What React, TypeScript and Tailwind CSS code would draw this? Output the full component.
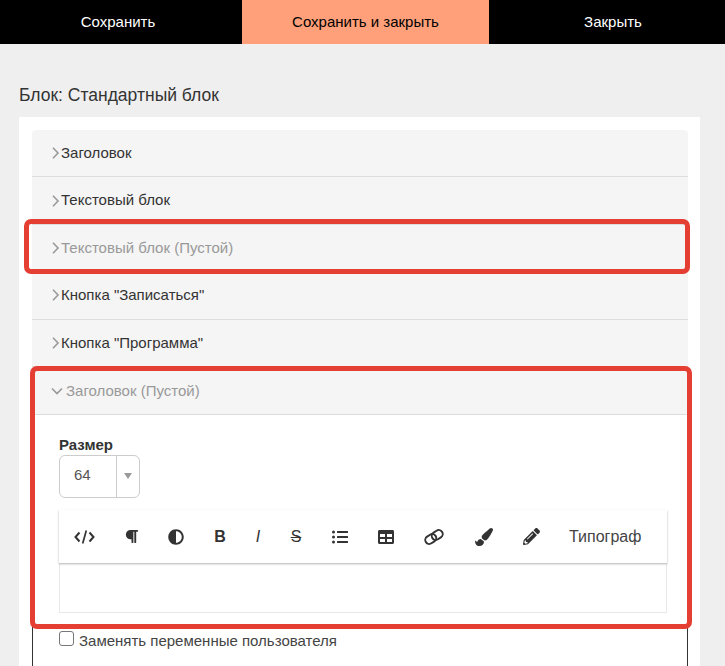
import React from "react";
import { FaAdjust, FaListUl, FaPaintBrush, FaParagraph, FaPencilAlt, FaTable } from "react-icons/fa";

const Chevron = ({ open }: { open?: boolean }) => (
  <svg width="12" height="12" viewBox="0 0 12 12" fill="none" stroke="#999" strokeWidth="1.6" className="shrink-0">
    {open ? <path d="M1 3.5 6 8.5 11 3.5" /> : <path d="M3 .7 8 6 3 11.3" />}
  </svg>
);

const Row = ({ title, muted }: { title: string; muted?: boolean }) => (
  <div className={`flex h-[47.4px] items-center border-b border-[#ddd] bg-[#f5f5f5] pl-[18px] text-[15px] ${muted ? "text-[#999]" : "text-[#333]"}`}>
    <Chevron />
    <span className="-ml-[1px]">{title}</span>
  </div>
);

const CodeIcon = () => (
  <svg width="21" height="14" viewBox="0 0 21 14" fill="none" stroke="#333" strokeWidth="2">
    <path d="M5.5 2.5 1.5 7l4 4.5M15.5 2.5l4 4.5-4 4.5" />
    <path d="M12.3.5 8.7 13.5" strokeWidth="1.7" />
  </svg>
);

const LinkIcon = () => (
  <svg width="20" height="16" viewBox="0 0 20 16" fill="none" stroke="#333" strokeWidth="1.9">
    <rect x="1" y="6" width="11.5" height="8" rx="4" transform="rotate(-33 6.75 10)" />
    <rect x="7.5" y="2" width="11.5" height="8" rx="4" transform="rotate(-33 13.25 6)" />
  </svg>
);

const tools = [
  { icon: <CodeIcon />, w: "w-[50px]" },
  { icon: <FaParagraph size={15} />, w: "w-[44px]" },
  { icon: <FaAdjust size={16} />, w: "w-[46px]" },
  { icon: <span className="text-[16px] font-bold">B</span>, w: "w-[42px]" },
  { icon: <span className="text-[16px] italic">I</span>, w: "w-[34px]" },
  { icon: <span className="text-[16px] line-through">S</span>, w: "w-[42px]" },
  { icon: <FaListUl size={16} />, w: "w-[46px]" },
  { icon: <FaTable size={16} />, w: "w-[46px]" },
  { icon: <LinkIcon />, w: "w-[50px]" },
  { icon: <FaPaintBrush size={18} />, w: "w-[50px]" },
  { icon: <FaPencilAlt size={17} />, w: "w-[44px]" },
];

export default function App() {
  return (
    <div className="relative h-[666px] overflow-hidden bg-[#efefef] font-['Liberation_Sans',Arial,sans-serif] text-[#333]">
      {/* Top buttons */}
      <div className="flex h-[44px] bg-black text-[15px] text-white">
        <div className="flex w-[242px] items-center justify-center pr-[6px]">Сохранить</div>
        <div className="flex w-[247px] items-center justify-center bg-[#ffa07a] text-black">Сохранить и закрыть</div>
        <div className="flex flex-1 items-center justify-center pl-[12px]">Закрыть</div>
      </div>

      <div className="pr-[25px] pl-[19px]">
        <h1 className="mt-[40px] h-[33px] text-[17.5px] leading-[22px] font-normal">Блок: Стандартный блок</h1>

        <div className="h-[600px] bg-white pt-[13px] pr-[12px] pl-[13px]">
          {/* Accordion */}
          <div className="overflow-hidden rounded-t-[4px]">
            <Row title="Заголовок" />
            <Row title="Текстовый блок" />
            <Row title="Текстовый блок (Пустой)" muted />
            <Row title="Кнопка &quot;Записаться&quot;" />
            <Row title="Кнопка &quot;Программа&quot;" />
            <div className="flex h-[48px] items-center border-b border-[#ddd] bg-[#f5f5f5] pt-[1px] pl-[19px] text-[15px] text-[#999]">
              <Chevron open />
              <span className="ml-[3px]">Заголовок (Пустой)</span>
            </div>
          </div>

          <div className="h-[300px] border-x border-[#333]">
            <div className="bg-white pt-[20px] pr-[20px] pl-[26px]">
              <div className="text-[15px] leading-[20px] font-bold">Размер</div>
              <div className="flex h-[43px] w-[81px] rounded-[6px] border border-[#ccc] text-[15px] text-[#555]">
                <div className="flex w-[56px] items-center pb-[2px] pl-[14px]">64</div>
                <div className="flex flex-1 items-center justify-center border-l border-[#ccc]">
                  <div className="h-0 w-0 border-x-[4px] border-t-[6px] border-x-transparent border-t-[#999]" />
                </div>
              </div>

              {/* Editor */}
              <div className="relative z-10 mt-[12px] flex h-[53px] items-center bg-white pt-[1px] text-[#333] shadow-[0_1px_2px_rgba(0,0,0,0.3)]">
                {tools.map((t, i) => (
                  <div key={i} className={`flex items-center justify-center ${t.w}`}>{t.icon}</div>
                ))}
                <span className="ml-[16px] text-[16px] text-[#444]">Типограф</span>
              </div>
              <div className="h-[50px] border border-t-0 border-[#e8e8e8] bg-white" />
            </div>

            <label className="mt-[17px] flex items-start pl-[26px] text-[15px] leading-[21px] text-[#444]">
              <span className="mt-[1px] h-[15px] w-[15px] rounded-[3px] border border-[#777] bg-white" />
              <span className="ml-[5px]">Заменять переменные пользователя</span>
            </label>
          </div>
        </div>
      </div>

      {/* Red annotation frames */}
      <div className="absolute top-[219px] left-[24px] h-[55px] w-[666px] rounded-[7px] border-[5px] border-[#e53e32]" />
      <div className="absolute top-[366px] left-[30px] h-[263px] w-[662px] rounded-[7px] border-[5px] border-[#e53e32]" />
    </div>
  );
}
